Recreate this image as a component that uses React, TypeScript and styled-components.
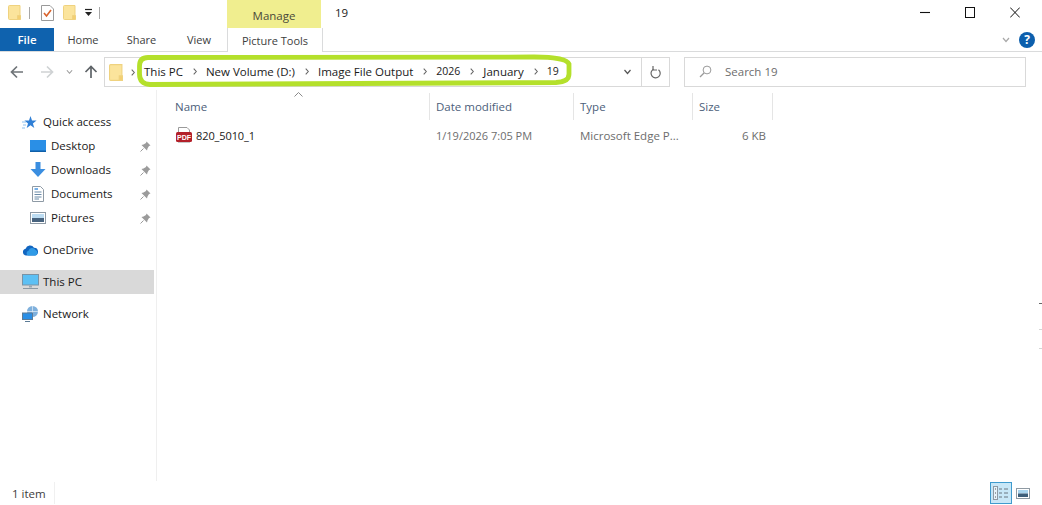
import React, { FC } from "react";
import styled, { createGlobalStyle } from "styled-components";

const GlobalStyle = createGlobalStyle`
  html, body {
    margin: 0;
    padding: 0;
    background: #fff;
  }
  body {
    font-family: "Open Sans", "Noto Sans", sans-serif;
    font-size: 11.5px;
    color: #1a1a1a;
    overflow: hidden;
  }
`;

const Window = styled.div`
  position: relative;
  width: 1042px;
  height: 505px;
  display: flex;
  flex-direction: column;
  overflow: hidden;
`;

const TitleBar = styled.div`
  height: 28px;
  display: flex;
  align-items: stretch;
`;

const QuickTools = styled.div`
  width: 227px;
  padding: 0 0 3px 8px;
  box-sizing: border-box;
  display: flex;
  align-items: center;
`;

const ToolGap = styled.span<{ $width: number }>`
  width: ${(p) => p.$width}px;
  flex-shrink: 0;
`;

const ToolSeparator = styled.span<{ $left: number; $right: number }>`
  width: 1px;
  height: 12px;
  background: #a8a8a8;
  margin: 0 ${(p) => p.$right}px 0 ${(p) => p.$left}px;
`;

const ManageTab = styled.div`
  width: 94px;
  background: #f0ee8f;
  color: #4a4a3a;
  display: flex;
  align-items: center;
  justify-content: center;
  padding-top: 2px;
  box-sizing: border-box;
`;

const WindowTitle = styled.div`
  flex: 1;
  padding: 0 0 3px 14px;
  display: flex;
  align-items: center;
`;

const WindowButtons = styled.div`
  display: flex;
  align-items: center;
  gap: 35px;
  padding: 0 22px 4px 0;
`;

const RibbonRow = styled.div`
  height: 24px;
  box-sizing: border-box;
  border-bottom: 1px solid #dadbdc;
  display: flex;
  align-items: stretch;
`;

const FileTab = styled.div`
  width: 54px;
  height: 23px;
  background: #0f62ae;
  color: #fff;
  display: flex;
  align-items: center;
  justify-content: center;
  font-weight: 600;
  font-size: 11.5px;
`;

const RibbonTab = styled.div<{ $width: number }>`
  width: ${(p) => p.$width}px;
  color: #3d3d3d;
  font-size: 11px;
  display: flex;
  align-items: center;
  justify-content: center;
`;

const ContextTab = styled(RibbonTab)`
  border-left: 1px solid #dadbdc;
  border-right: 1px solid #dadbdc;
  margin-bottom: -1px;
  background: #fff;
`;

const RibbonEnd = styled.div`
  margin-left: auto;
  display: flex;
  align-items: center;
  gap: 9px;
  padding-right: 7px;
`;

const HelpBadge = styled.div`
  width: 16px;
  height: 16px;
  border-radius: 50%;
  background: #0c5fad;
  color: #fff;
  font-size: 12px;
  font-weight: 700;
  display: flex;
  align-items: center;
  justify-content: center;
`;

const AddressRow = styled.div`
  height: 38px;
  display: flex;
  align-items: center;
  padding: 2px 16px 0 10px;
  box-sizing: border-box;
`;

const NavButtons = styled.div`
  width: 94px;
  display: flex;
  align-items: center;
  padding-bottom: 1px;
`;

const AddressBox = styled.div`
  position: relative;
  width: 566px;
  height: 30px;
  box-sizing: border-box;
  border: 1px solid #d9d9d9;
  display: flex;
  align-items: center;
  padding-left: 4px;
`;

const Crumbs = styled.div`
  flex: 1;
  display: flex;
  align-items: center;
  padding-bottom: 2px;
`;

const Crumb = styled.span<{ $numeric?: boolean }>`
  color: #1a1a1a;
  white-space: nowrap;
  font-size: ${(p) => (p.$numeric ? "10.5px" : "11.5px")};
`;

const AddressTools = styled.div`
  display: flex;
  align-items: center;
  height: 100%;
  margin-left: -1px;
`;

const RefreshCell = styled.div`
  width: 27px;
  height: 100%;
  border-left: 1px solid #d9d9d9;
  margin-left: 9px;
  display: flex;
  align-items: center;
  justify-content: center;
`;

/* the hand drawn marker round the path, it leans a little to the right */
const HighlightMark = styled.svg`
  position: absolute;
  left: 29px;
  top: -6px;
  pointer-events: none;
`;

const SearchBox = styled.div`
  width: 342px;
  height: 30px;
  margin-left: 14px;
  box-sizing: border-box;
  border: 1px solid #d9d9d9;
  display: flex;
  align-items: center;
  gap: 13px;
  padding: 0 0 1px 14px;
  color: #6d6d6d;
`;

const Body = styled.div`
  flex: 1;
  display: flex;
  min-height: 0;
`;

const Sidebar = styled.nav`
  width: 157px;
  box-sizing: border-box;
  border-right: 1px solid #efefef;
  padding-top: 20px;
`;

const NavGroup = styled.div`
  margin-bottom: 8px;
`;

const NavRow = styled.div<{ $indent?: boolean; $selected?: boolean }>`
  width: 154px;
  height: 24px;
  box-sizing: border-box;
  display: flex;
  align-items: center;
  padding-left: ${(p) => (p.$indent ? 30 : 22)}px;
  background: ${(p) => (p.$selected ? "#d9d9d9" : "transparent")};
`;

const NavIcon = styled.span`
  width: 21px;
  display: flex;
  align-items: center;
  flex-shrink: 0;
`;

const NavLabel = styled.span`
  flex: 1;
  white-space: nowrap;
  padding-bottom: 1px;
`;

const PinSlot = styled.span`
  width: 14px;
  display: flex;
`;

const ListPane = styled.main`
  flex: 1;
  padding-left: 12px;
`;

const Columns = "261px 144px 119px 80px";

const HeaderRow = styled.div`
  position: relative;
  display: grid;
  grid-template-columns: ${Columns};
  height: 27px;
  margin-top: 3px;
  color: #4c607a;
`;

const HeaderCell = styled.div`
  padding-left: 6px;
  box-sizing: border-box;
  display: flex;
  align-items: center;
  border-right: 1px solid #e5e5e5;
`;

const SortCaret = styled.span`
  position: absolute;
  left: 125px;
  top: -1px;
  display: flex;
`;

const FileRow = styled.div`
  display: grid;
  grid-template-columns: ${Columns};
  height: 22px;
  margin-top: 4px;
  align-items: center;
`;

const NameCell = styled.div`
  display: flex;
  align-items: center;
  gap: 4px;
  padding-left: 7px;
`;

const FileName = styled.span`
  font-size: 11px;
  letter-spacing: -0.1px;
`;

const MetaCell = styled.div<{ $right?: boolean; $numeric?: boolean }>`
  color: #6d6d6d;
  padding: 0 7px 0 6px;
  font-size: ${(p) => (p.$numeric ? "11px" : "11.5px")};
  text-align: ${(p) => (p.$right ? "right" : "left")};
  white-space: nowrap;
`;

const StatusBar = styled.footer`
  height: 24px;
  display: flex;
  align-items: center;
  justify-content: space-between;
  padding: 0 11px 0 12px;
  flex-shrink: 0;
  color: #3d3d3d;
`;

const StatusCount = styled.span`
  width: 43px;
  height: 22px;
  display: flex;
  align-items: center;
  box-sizing: border-box;
  border-right: 1px solid #f0f0f0;
`;

const ViewButtons = styled.div`
  display: flex;
  align-items: center;
  gap: 3px;
`;

const ViewButton = styled.div<{ $active?: boolean }>`
  width: ${(p) => (p.$active ? 22 : 16)}px;
  height: 22px;
  box-sizing: border-box;
  display: flex;
  align-items: center;
  justify-content: center;
  border: 1px solid ${(p) => (p.$active ? "#3f9bce" : "transparent")};
  background: ${(p) => (p.$active ? "#c8e7f7" : "transparent")};
`;

const EdgeMark = styled.span<{ $top: number; $dark?: boolean }>`
  position: absolute;
  right: 0;
  top: ${(p) => p.$top}px;
  width: 3px;
  height: 1px;
  background: ${(p) => (p.$dark ? "#666" : "#d5d5d5")};
`;

const FolderIcon: FC<{ large?: boolean }> = ({ large }) => (
  <svg width={large ? 14 : 13} height={large ? 17 : 15} viewBox="0 0 13 15" preserveAspectRatio="none">
    <path d="M.5 1.5Q.5.5 1.5.5H12V14.5H1.5Q.5 14.5.5 13.5Z" fill="#fbe49c" stroke="#efd27f" />
    <path d="M9.5 10.5H12.5V14.5H9.5Z" fill="#f4cf72" stroke="#efd27f" />
  </svg>
);

const ChecklistIcon = () => (
  <svg width="13" height="16" viewBox="0 0 13 16">
    <path d="M.5.5H9L12.5 4V15.5H.5Z" fill="#fff" stroke="#9a9a9a" />
    <path d="M3 8 5.5 11 10 5" fill="none" stroke="#d9622b" strokeWidth="1.6" />
  </svg>
);

const ToolbarDropdown = () => (
  <svg width="9" height="10" viewBox="0 0 9 10">
    <path d="M1 1.5H8" stroke="#222" strokeWidth="1.2" />
    <path d="M1 4H8L4.5 8Z" fill="#222" />
  </svg>
);

const ArrowSvg = styled.svg<{ $angle: number }>`
  transform: rotate(${(p) => p.$angle}deg);
`;

const ArrowIcon: FC<{ dir: "left" | "right" | "up"; color: string }> = ({ dir, color }) => {
  const angle = dir === "left" ? 0 : dir === "right" ? 180 : 90;
  return (
    <ArrowSvg $angle={angle} width="14" height="14" viewBox="0 0 14 14">
      <path d="M13 7H1.5M7 1.5 1.5 7 7 12.5" fill="none" stroke={color} strokeWidth="1.7" />
    </ArrowSvg>
  );
};

const Chevron: FC<{ color?: string; width?: number }> = ({ color = "#777", width = 8 }) => (
  <svg width={width} height="6" viewBox="0 0 8 6">
    <path d="M1 1 4 4.5 7 1" fill="none" stroke={color} strokeWidth="1.2" />
  </svg>
);

const SepSvg = styled.svg<{ $left: number; $right: number }>`
  margin: 0 ${(p) => p.$right}px 0 ${(p) => p.$left}px;
  flex-shrink: 0;
`;

const CrumbSep: FC<{ left: number; right: number }> = ({ left, right }) => (
  <SepSvg $left={left} $right={right} width="4" height="7" viewBox="0 0 4 7">
    <path d="M.7.7 3.3 3.5.7 6.3" fill="none" stroke="#666" strokeWidth="1.1" />
  </SepSvg>
);

const RefreshIcon = () => (
  <svg width="12" height="13" viewBox="0 0 12 13">
    <path d="M4 2.7A4.6 4.6 0 1 0 9 3.2" fill="none" stroke="#666" strokeWidth="1.2" transform="translate(-.5 .5)" />
    <path d="M3 0V4H7" fill="none" stroke="#666" strokeWidth="1.2" />
  </svg>
);

const SearchIcon = () => (
  <svg width="13" height="13" viewBox="0 0 13 13">
    <circle cx="8" cy="5" r="3.9" fill="none" stroke="#9a9a9a" />
    <path d="M5 8 1 12" stroke="#9a9a9a" strokeWidth="1.2" />
  </svg>
);

const StarIcon = () => (
  <svg width="15" height="15" viewBox="0 0 15 15">
    <path d="M8.5 1 10 5.6H14.6L10.9 8.4 12.3 13 8.5 10.2 4.7 13 6 8.4 2.4 5.6H7Z" fill="#2f7fd6" />
    <path d="M0 7H4M1 10H4M0 13H3" stroke="#8cc0ee" strokeWidth="1" />
  </svg>
);

const DesktopIcon = () => (
  <svg width="16" height="12" viewBox="0 0 16 12">
    <rect width="16" height="12" fill="#2a8fe6" />
    <rect y="10.5" width="16" height="1.5" fill="#0f5fa8" />
  </svg>
);

const DownloadIcon = () => (
  <svg width="16" height="16" viewBox="0 0 16 16">
    <path d="M5.5 0H10.5V7H15.5L8 15 .5 7H5.5Z" fill="#3a8ee0" />
  </svg>
);

const DocumentIcon = () => (
  <svg width="16" height="16" viewBox="0 0 16 16">
    <path d="M2.5.5H10.5L13.5 3.5V15.5H2.5Z" fill="#fff" stroke="#8e9aa5" />
    <path d="M4.5 6H11.5M4.5 8.5H11.5M4.5 11H11.5M4.5 13H9" stroke="#6b8ba8" />
    <path d="M4.5 3H8" stroke="#3a8ee0" strokeWidth="1.4" />
  </svg>
);

const PictureIcon = () => (
  <svg width="16" height="12" viewBox="0 0 16 12">
    <rect x=".5" y=".5" width="15" height="11" fill="#fff" stroke="#8e9aa5" />
    <rect x="2" y="2" width="12" height="4" fill="#bcdcf2" />
    <rect x="2" y="6" width="12" height="4" fill="#47637e" />
  </svg>
);

const PinIcon = () => (
  <svg width="11" height="11" viewBox="0 0 11 11">
    <path d="M6.5.5 10.5 4.5 9 5 7.5 7.5 7 9.5 1.5 4 3.5 3.5 6 2Z" fill="#9b9b9b" />
    <path d="M3.5 7.5.5 10.5" stroke="#9b9b9b" />
  </svg>
);

const CloudIcon = () => (
  <svg width="17" height="12" viewBox="0 0 17 12">
    <path d="M4 11.5A3.4 3.4 0 0 1 3.6 4.8 4.6 4.6 0 0 1 12 3.8 3.9 3.9 0 0 1 13 11.5Z" fill="#1165c0" />
    <path d="M6 11.5A2.5 2.5 0 0 1 6.5 6.8 3.8 3.8 0 0 1 13.5 6 2.9 2.9 0 0 1 13.5 11.5Z" fill="#2f9ae6" />
  </svg>
);

const MonitorIcon = () => (
  <svg width="17" height="16" viewBox="0 0 17 16">
    <rect x=".5" y=".5" width="16" height="10.5" fill="#5cc0f4" stroke="#7a93a5" />
    <path d="M7 11.5H10V13.5H7Z" fill="#9aa8b3" />
    <path d="M1 14.5H16" stroke="#8a98a3" />
  </svg>
);

const NetworkIcon = () => (
  <svg width="17" height="16" viewBox="0 0 17 16">
    <circle cx="10.5" cy="5.5" r="5.5" fill="#7fb0dc" />
    <path d="M10.5 0V11M5 5.5H16" stroke="#dbe9f5" strokeWidth=".8" />
    <rect x=".5" y="7" width="10" height="6.5" fill="#2a8fe6" stroke="#5c7b96" />
    <path d="M3 15.5H8" stroke="#5c7b96" />
  </svg>
);

const PdfIcon = () => (
  <svg width="16" height="17" viewBox="0 0 16 17">
    <path d="M2.5.5H11L13.5 3V6H2.5Z" fill="#fff" stroke="#9a9a9a" />
    <rect y="5" width="16" height="10" rx="1.5" fill="#b3202a" />
    <text x="8" y="13" textAnchor="middle" fontSize="7" fontWeight="700" fill="#fff" fontFamily="Liberation Sans, sans-serif">PDF</text>
    <path d="M2 15.5H14" stroke="#c9c9c9" />
  </svg>
);

const DetailsViewIcon = () => (
  <svg width="16" height="14" viewBox="0 0 16 14">
    <rect x=".5" y=".5" width="4" height="13" fill="#e6f3fa" stroke="#8f9aa3" />
    <path d="M2 3H3M2 7H3M2 11H3" stroke="#555" />
    <path d="M6 3H9M11 3H15M6 7H9M11 7H15M6 11H9M11 11H15" stroke="#6b7680" />
  </svg>
);

const PreviewViewIcon = () => (
  <svg width="14" height="11" viewBox="0 0 14 11">
    <rect x=".5" y=".5" width="13" height="10" fill="#fff" stroke="#8f9aa3" />
    <rect x="2" y="2" width="10" height="3.5" fill="#a8d4ee" />
    <rect x="2" y="5.5" width="10" height="3.5" fill="#3e5f7a" />
  </svg>
);

const quickAccess = [
  { label: "Desktop", icon: <DesktopIcon /> },
  { label: "Downloads", icon: <DownloadIcon /> },
  { label: "Documents", icon: <DocumentIcon /> },
  { label: "Pictures", icon: <PictureIcon /> },
];

const App: FC = () => {
  return (
    <Window>
      <GlobalStyle />
      <TitleBar>
        <QuickTools>
          <FolderIcon />
          <ToolSeparator $left={8} $right={11} />
          <ChecklistIcon />
          <ToolGap $width={9} />
          <FolderIcon />
          <ToolGap $width={8} />
          <ToolbarDropdown />
          <ToolSeparator $left={6} $right={0} />
        </QuickTools>
        <ManageTab>Manage</ManageTab>
        <WindowTitle>19</WindowTitle>
        <WindowButtons>
          <svg width="10" height="11" viewBox="0 0 10 11">
            <path d="M0 5.5H10" stroke="#111" strokeWidth="1.1" />
          </svg>
          <svg width="10" height="11" viewBox="0 0 10 11">
            <rect x=".5" y=".5" width="9" height="10" fill="none" stroke="#111" />
          </svg>
          <svg width="10" height="11" viewBox="0 0 10 11">
            <path d="M.2.5 9.8 10.5M9.8.5.2 10.5" stroke="#111" />
          </svg>
        </WindowButtons>
      </TitleBar>

      <RibbonRow>
        <FileTab>File</FileTab>
        <RibbonTab $width={58}>Home</RibbonTab>
        <RibbonTab $width={59}>Share</RibbonTab>
        <RibbonTab $width={56}>View</RibbonTab>
        <ContextTab $width={94}>Picture Tools</ContextTab>
        <RibbonEnd>
          <Chevron color="#a8a8a8" />
          <HelpBadge>?</HelpBadge>
        </RibbonEnd>
      </RibbonRow>

      <AddressRow>
        <NavButtons>
          <ArrowIcon dir="left" color="#6f7478" />
          <ToolGap $width={16} />
          <ArrowIcon dir="right" color="#cfd2d4" />
          <ToolGap $width={12} />
          <Chevron color="#9a9a9a" width={7} />
          <ToolGap $width={11} />
          <ArrowIcon dir="up" color="#5f6468" />
        </NavButtons>
        <AddressBox>
          <FolderIcon large />
          <CrumbSep left={8} right={9} />
          <Crumbs>
            <Crumb>This PC</Crumb>
            <CrumbSep left={10} right={9} />
            <Crumb>New Volume (D:)</Crumb>
            <CrumbSep left={10} right={9} />
            <Crumb>Image File Output</Crumb>
            <CrumbSep left={10} right={9} />
            <Crumb $numeric>2026</Crumb>
            <CrumbSep left={10} right={9} />
            <Crumb>January</Crumb>
            <CrumbSep left={10} right={9} />
            <Crumb $numeric>19</Crumb>
          </Crumbs>
          <AddressTools>
            <Chevron color="#555" width={9} />
            <RefreshCell>
              <RefreshIcon />
            </RefreshCell>
          </AddressTools>
          <HighlightMark width="442" height="38" viewBox="0 0 442 38">
            <path
              d="M14 5.5 400 5Q432 5 435 12V22Q435 30 422 30.5L16 32.5Q5.5 32 5.5 22V14Q5.5 5.5 14 5.5Z"
              fill="none"
              stroke="#b4e02b"
              strokeWidth="4.8"
            />
          </HighlightMark>
        </AddressBox>
        <SearchBox>
          <SearchIcon />
          Search 19
        </SearchBox>
      </AddressRow>

      <Body>
        <Sidebar>
          <NavGroup>
            <NavRow>
              <NavIcon><StarIcon /></NavIcon>
              <NavLabel>Quick access</NavLabel>
            </NavRow>
            {quickAccess.map((item) => (
              <NavRow $indent key={item.label}>
                <NavIcon>{item.icon}</NavIcon>
                <NavLabel>{item.label}</NavLabel>
                <PinSlot><PinIcon /></PinSlot>
              </NavRow>
            ))}
          </NavGroup>
          <NavGroup>
            <NavRow>
              <NavIcon><CloudIcon /></NavIcon>
              <NavLabel>OneDrive</NavLabel>
            </NavRow>
          </NavGroup>
          <NavGroup>
            <NavRow $selected>
              <NavIcon><MonitorIcon /></NavIcon>
              <NavLabel>This PC</NavLabel>
            </NavRow>
          </NavGroup>
          <NavGroup>
            <NavRow>
              <NavIcon><NetworkIcon /></NavIcon>
              <NavLabel>Network</NavLabel>
            </NavRow>
          </NavGroup>
        </Sidebar>

        <ListPane>
          <HeaderRow>
            <SortCaret>
              <svg width="9" height="5" viewBox="0 0 9 5">
                <path d="M.5 4.5 4.5.5 8.5 4.5" fill="none" stroke="#8a8a8a" />
              </svg>
            </SortCaret>
            <HeaderCell>Name</HeaderCell>
            <HeaderCell>Date modified</HeaderCell>
            <HeaderCell>Type</HeaderCell>
            <HeaderCell>Size</HeaderCell>
          </HeaderRow>
          <FileRow>
            <NameCell>
              <PdfIcon />
              <FileName>820_5010_1</FileName>
            </NameCell>
            <MetaCell $numeric>1/19/2026 7:05 PM</MetaCell>
            <MetaCell>Microsoft Edge P...</MetaCell>
            <MetaCell $right>6 KB</MetaCell>
          </FileRow>
        </ListPane>
      </Body>

      <StatusBar>
        <StatusCount>1 item</StatusCount>
        <ViewButtons>
          <ViewButton $active><DetailsViewIcon /></ViewButton>
          <ViewButton><PreviewViewIcon /></ViewButton>
        </ViewButtons>
      </StatusBar>

      <EdgeMark $top={303} $dark />
      <EdgeMark $top={329} />
      <EdgeMark $top={348} />
    </Window>
  );
};

export default App;
